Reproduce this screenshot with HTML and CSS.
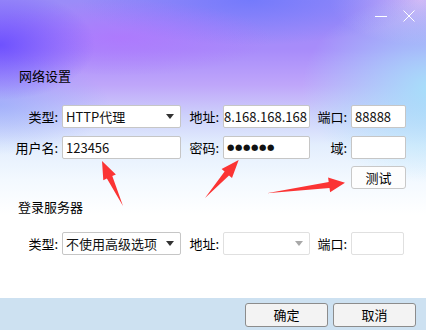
FILE: index.html
```html
<!DOCTYPE html>
<html lang="zh-CN">
<head>
<meta charset="utf-8">
<title>网络设置</title>
<link rel="stylesheet" href="styles.css">
</head>
<body>
<div class="window">
  <div class="titlebar">
    <svg class="tb-btn" width="14" height="14" viewBox="0 0 14 14"><line x1="1" y1="7.5" x2="13" y2="7.5" stroke="#fff" stroke-width="1"/></svg>
    <svg class="tb-btn" width="14" height="14" viewBox="0 0 14 14"><path d="M1.5 1.5 L12.5 12.5 M12.5 1.5 L1.5 12.5" stroke="#fff" stroke-width="1" fill="none"/></svg>
  </div>
  <div class="content">
    <div class="section-title first">网络设置</div>
    <div class="form-grid net">
      <div class="lbl">类型:</div>
      <div class="field combo"><span class="val">HTTP代理</span><span class="arrow"></span></div>
      <div class="lbl">地址:</div>
      <div class="field clip"><span class="val">58.168.168.168</span></div>
      <div class="lbl">端口:</div>
      <div class="field"><span class="val">88888</span></div>

      <div class="lbl">用户名:</div>
      <div class="field"><span class="val">123456</span></div>
      <div class="lbl">密码:</div>
      <div class="field"><span class="val dots">●●●●●●</span></div>
      <div class="lbl">域:</div>
      <div class="field"></div>

      <div class="btn-cell"><button class="btn test">测试</button></div>
    </div>
    <div class="section-title second">登录服务器</div>
    <div class="form-grid login">
      <div class="lbl">类型:</div>
      <div class="field combo"><span class="val">不使用高级选项</span><span class="arrow"></span></div>
      <div class="lbl">地址:</div>
      <div class="field combo disabled"><span class="val"></span><span class="arrow"></span></div>
      <div class="lbl">端口:</div>
      <div class="field disabled narrow"></div>
    </div>
  </div>
  <div class="footer">
    <button class="btn dlg">确定</button>
    <button class="btn dlg">取消</button>
  </div>
  <svg class="arrows" width="426" height="330" viewBox="0 0 426 330">
    <polygon points="123,206 106.9,178.6 103.3,180.2 102,161 115.9,174.4 112.3,176.0" fill="#fb3434"/>
    <polygon points="205,198 229.0,175.5 232.0,178.1 238.7,160 221.6,168.9 224.6,171.5" fill="#fb3434"/>
    <polygon points="266.7,193.3 329.5,187.9 330.1,192.3 345,182.7 328.1,177.5 328.7,181.9" fill="#fb3434"/>
  </svg>
</div>
</body>
</html>
```
FILE: styles.css
```css
html, body {
  margin: 0;
  padding: 0;
}
body {
  width: 426px;
  height: 330px;
  overflow: hidden;
  font-family: "Noto Sans CJK SC", "Noto Sans", sans-serif;
  font-size: 13px;
  color: #000;
}
.window {
  position: relative;
  width: 426px;
  height: 330px;
  display: flex;
  flex-direction: column;
  background:
    radial-gradient(ellipse 95px 55px at 0px 45px, rgba(100, 72, 255, 0.85), rgba(100, 72, 255, 0) 100%),
    radial-gradient(ellipse 150px 38px at 120px 38px, rgba(178, 112, 255, 0.65), rgba(178, 112, 255, 0) 100%),
    radial-gradient(ellipse 130px 95px at 432px 88px, rgba(165, 226, 250, 0.95), rgba(165, 226, 250, 0) 100%),
    radial-gradient(ellipse 170px 45px at 250px 0px, rgba(112, 120, 252, 0.9), rgba(112, 120, 252, 0) 100%),
    radial-gradient(ellipse 90px 45px at 420px 0px, rgba(218, 188, 246, 0.9), rgba(218, 188, 246, 0) 100%),
    radial-gradient(ellipse 110px 50px at 0px 105px, rgba(140, 165, 250, 0.6), rgba(140, 165, 250, 0) 100%),
    linear-gradient(180deg, #9a8cf8 0px, #a88cfa 50px, #bfa6fa 85px, #cdd0fb 115px, #e3eefd 145px, #f3f9ff 180px, #ffffff 215px);
}
.titlebar {
  height: 36px;
  display: flex;
  justify-content: flex-end;
  align-items: flex-start;
  padding: 9px 10px 0 0;
  box-sizing: border-box;
  gap: 14px;
}
.tb-btn {
  display: block;
}
.content {
  flex: 1;
}
.section-title {
  line-height: 18px;
  height: 18px;
  padding-left: 18px;
}
.section-title.first {
  margin-top: 31px;
  padding-left: 19px;
}
.section-title.second {
  margin-top: 8px;
}
.form-grid {
  display: grid;
  grid-template-columns: 62px 119px 42px 87px 41px 55px;
  grid-auto-rows: 23px;
  row-gap: 8px;
}
.form-grid.net {
  margin-top: 20px;
}
.form-grid.login {
  margin-top: 16px;
}
.lbl {
  text-align: right;
  padding-right: 4px;
  line-height: 23px;
  white-space: nowrap;
}
.field {
  box-sizing: border-box;
  height: 23px;
  background: #fff;
  border: 1px solid #c6c6c6;
  border-radius: 2px;
  display: flex;
  align-items: center;
  padding: 0 3px 0 3px;
  overflow: hidden;
  white-space: nowrap;
}
.field .val {
  line-height: 21px;
  color: #111;
}
.combo {
  justify-content: space-between;
  padding-right: 6px;
}
.arrow {
  width: 0;
  height: 0;
  border-left: 4.5px solid transparent;
  border-right: 4.5px solid transparent;
  border-top: 5px solid #333;
}
.clip {
  justify-content: flex-end;
  padding-right: 2px;
}
.clip .val {
  flex-shrink: 0;
}
.dots {
  font-family: "DejaVu Sans", sans-serif;
  font-size: 8.5px;
  letter-spacing: 0.6px;
  color: #000;
}
.disabled {
  border-color: #e0e0e0;
}
.disabled .arrow {
  border-top-color: #a8a8a8;
}
.narrow {
  width: 53px;
}
.btn-cell {
  grid-column: 6;
  margin-top: -1px;
}
.btn {
  font-family: "Noto Sans CJK SC", "Noto Sans", sans-serif;
  font-size: 13px;
  color: #000;
  margin: 0;
  padding: 0;
  box-sizing: border-box;
  cursor: default;
}
.test {
  width: 55px;
  height: 23px;
  background: #fdfdfd;
  border: 1px solid #c8c8c8;
  border-radius: 3px;
  line-height: 21px;
}
.footer {
  height: 32px;
  background: #cde1f1;
  display: flex;
  justify-content: flex-end;
  align-items: flex-start;
  padding: 5px 10px 0 0;
  box-sizing: border-box;
  gap: 5px;
}
.dlg {
  width: 83px;
  height: 24px;
  background: #f3f3f3;
  border: 1px solid #8c8c8c;
  border-radius: 3px;
  line-height: 22px;
}
.arrows {
  position: absolute;
  left: 0;
  top: 0;
  pointer-events: none;
}
```
